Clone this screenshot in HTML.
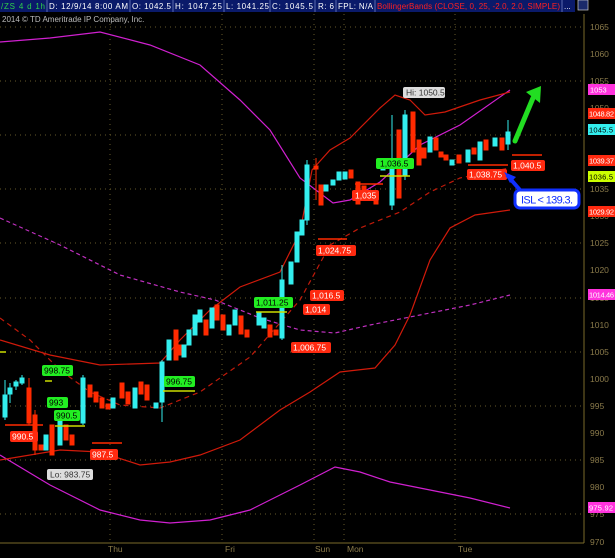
<!DOCTYPE html><html><head><style>
body{margin:0;background:#000;width:615px;height:553px;overflow:hidden;font-family:"Liberation Sans",sans-serif}
</style></head><body>
<svg width="615" height="553" xmlns="http://www.w3.org/2000/svg" font-family="Liberation Sans, sans-serif">
<rect width="615" height="553" fill="#000"/>
<!-- header -->
<rect x="0" y="0" width="575" height="12" fill="#0a1a6a"/>
<g stroke="#5a6ab0" stroke-width="1"><line x1="47" y1="0" x2="47" y2="12"/><line x1="130" y1="0" x2="130" y2="12"/><line x1="173" y1="0" x2="173" y2="12"/><line x1="224" y1="0" x2="224" y2="12"/><line x1="270" y1="0" x2="270" y2="12"/><line x1="315" y1="0" x2="315" y2="12"/><line x1="336" y1="0" x2="336" y2="12"/><line x1="375" y1="0" x2="375" y2="12"/><line x1="562" y1="0" x2="562" y2="12"/></g>
<g font-size="8" fill="#fff">
<text x="1" y="9" fill="#2ed04a" textLength="44">/ZS 4 d 1h</text>
<text x="49" y="9" textLength="79">D: 12/9/14 8:00 AM</text>
<text x="132" y="9" textLength="39">O: 1042.5</text>
<text x="175" y="9" textLength="47">H: 1047.25</text>
<text x="226" y="9" textLength="43">L: 1041.25</text>
<text x="272" y="9" textLength="41">C: 1045.5</text>
<text x="318" y="9" textLength="16">R: 6</text>
<text x="338" y="9" textLength="35">FPL: N/A</text>
<text x="377" y="9" fill="#ff2020" textLength="183">BollingerBands (CLOSE, 0, 25, -2.0, 2.0, SIMPLE)</text>
<text x="564" y="9">...</text>
</g>
<rect x="578" y="0" width="10" height="10" fill="#1a2a6a" stroke="#ccc" stroke-width="0.7"/>
<text x="2" y="22" font-size="8" fill="#bbb">2014 © TD Ameritrade IP Company, Inc.</text>
<!-- grid -->
<g stroke="#665a2a" stroke-width="1" stroke-dasharray="1,4">
<line x1="0" y1="27" x2="583" y2="27"/><line x1="0" y1="81" x2="583" y2="81"/><line x1="0" y1="135" x2="583" y2="135"/><line x1="0" y1="189" x2="583" y2="189"/><line x1="0" y1="243" x2="583" y2="243"/><line x1="0" y1="298" x2="583" y2="298"/><line x1="0" y1="352" x2="583" y2="352"/><line x1="0" y1="406" x2="583" y2="406"/><line x1="0" y1="460" x2="583" y2="460"/><line x1="0" y1="514" x2="583" y2="514"/>
<line x1="110" y1="14" x2="110" y2="542"/><line x1="222" y1="14" x2="222" y2="542"/><line x1="314" y1="14" x2="314" y2="542"/><line x1="344" y1="14" x2="344" y2="542"/><line x1="455" y1="14" x2="455" y2="542"/>
</g>
<!-- right axis -->
<line x1="584" y1="14" x2="584" y2="543" stroke="#7a6a2a"/>
<line x1="0" y1="543" x2="584" y2="543" stroke="#7a6a2a"/>
<g font-size="8.5" fill="#8a7a4a">
<text x="590" y="30">1065</text><text x="590" y="57">1060</text><text x="590" y="84">1055</text><text x="590" y="111">1050</text><text x="590" y="165">1040</text><text x="590" y="192">1035</text><text x="590" y="219">1030</text><text x="590" y="246">1025</text><text x="590" y="273">1020</text><text x="590" y="301">1015</text><text x="590" y="328">1010</text><text x="590" y="355">1005</text><text x="590" y="382">1000</text><text x="590" y="409">995</text><text x="590" y="436">990</text><text x="590" y="463">985</text><text x="590" y="490">980</text><text x="590" y="517">975</text><text x="590" y="545">970</text>
<text x="108" y="552">Thu</text><text x="225" y="552">Fri</text><text x="315" y="552">Sun</text><text x="347" y="552">Mon</text><text x="458" y="552">Tue</text>
</g>
<g font-size="7.5">
<rect x="588" y="84" width="27" height="11" fill="#ff33dd"/><text x="590" y="92.5" fill="#fff">1053</text>
<rect x="588" y="108" width="27" height="11" fill="#ff2a10"/><text x="589" y="116.5" fill="#fff" textLength="25">1048.82</text>
<rect x="588" y="124" width="27" height="11" fill="#33eeee"/><text x="589" y="132.5" fill="#000" textLength="24">1045.5</text>
<rect x="588" y="155" width="27" height="11" fill="#ff2a10"/><text x="589" y="163.5" fill="#fff" textLength="25">1039.37</text>
<rect x="588" y="171" width="27" height="11" fill="#ccff00"/><text x="589" y="179.5" fill="#000" textLength="24">1036.5</text>
<rect x="588" y="206" width="27" height="11" fill="#ff2a10"/><text x="589" y="214.5" fill="#fff" textLength="25">1029.92</text>
<rect x="588" y="289" width="27" height="11" fill="#ff33dd"/><text x="589" y="297.5" fill="#fff" textLength="25">1014.46</text>
<rect x="588" y="502" width="27" height="11" fill="#ff33dd"/><text x="589" y="510.5" fill="#fff" textLength="24">975.92</text>
</g>
<!-- bands -->
<g fill="none" stroke-width="1.2">
<polyline stroke="#d020d0" points="0,42 50,38 100,32 150,45 200,65 240,100 270,130 300,178 333,203 350,200 380,182 420,145 460,125 510,90"/>
<polyline stroke="#d020d0" points="0,455 50,485 100,510 140,520 170,523 210,520 250,510 300,485 335,467 360,472 390,482 430,490 470,498 510,508"/>
<polyline stroke="#c030c0" stroke-dasharray="4,3" points="0,218 60,245 120,275 180,292 215,300 260,318 300,330 335,333 370,325 420,315 470,305 510,295"/>
<polyline stroke="#d01a0a" points="0,340 50,355 100,365 160,363 180,340 210,310 240,287 280,272 300,232 312,170 330,150 350,138 380,108 395,95 410,100 425,115 445,112 480,100 510,92"/>
<polyline stroke="#d01a0a" points="0,460 60,450 100,452 140,465 170,462 200,455 240,440 280,410 310,392 340,372 375,368 395,345 410,315 430,260 450,228 475,215 510,210"/>
<polyline stroke="#c01a0a" stroke-dasharray="5,4" points="0,318 30,340 60,370 90,392 120,405 160,408 200,392 250,357 300,300 330,245 360,228 400,212 430,192 460,178 490,172 510,168"/>
</g>
<!-- candles -->
<g stroke-width="1">
<g stroke="#33eeee" fill="#33eeee">
<line x1="5" y1="380" x2="5" y2="420"/><rect x="3" y="395" width="4" height="22"/>
<line x1="10" y1="383" x2="10" y2="403"/><rect x="8" y="388" width="4" height="6"/>
<line x1="16" y1="380" x2="16" y2="390"/><rect x="14" y="382" width="4" height="4"/>
<line x1="22" y1="375" x2="22" y2="385"/><rect x="20" y="378" width="4" height="5"/>
<rect x="44" y="435" width="4" height="15"/><rect x="58" y="415" width="4" height="30"/>
<line x1="83" y1="375" x2="83" y2="425"/><rect x="81" y="378" width="4" height="45"/>
<rect x="111" y="398" width="4" height="10"/><rect x="133" y="388" width="4" height="20"/>
<rect x="154" y="403" width="4" height="5"/><line x1="162" y1="360" x2="162" y2="422"/><rect x="160" y="362" width="4" height="40"/>
<rect x="167" y="340" width="4" height="20"/><rect x="182" y="345" width="4" height="12"/><rect x="187" y="330" width="4" height="15"/>
<rect x="193" y="315" width="4" height="20"/><rect x="198" y="310" width="4" height="12"/><rect x="210" y="308" width="4" height="20"/>
<rect x="227" y="325" width="4" height="10"/><rect x="233" y="310" width="4" height="15"/><rect x="257" y="312" width="4" height="13"/>
<rect x="262" y="318" width="4" height="10"/><line x1="282" y1="265" x2="282" y2="340"/><rect x="280" y="280" width="4" height="58"/>
<rect x="289" y="262" width="4" height="22"/><rect x="295" y="232" width="4" height="30"/><rect x="300" y="220" width="4" height="15"/>
<line x1="307" y1="160" x2="307" y2="225"/><rect x="305" y="165" width="4" height="55"/>
<rect x="324" y="185" width="4" height="6"/><rect x="331" y="180" width="4" height="5"/><rect x="337" y="172" width="4" height="8"/><rect x="343" y="172" width="4" height="7"/>
<rect x="381" y="160" width="4" height="10"/><line x1="392" y1="115" x2="392" y2="210"/><rect x="390" y="165" width="4" height="40"/>
<line x1="405" y1="110" x2="405" y2="180"/><rect x="403" y="115" width="4" height="60"/><rect x="428" y="137" width="4" height="15"/>
<rect x="450" y="160" width="4" height="5"/><rect x="466" y="150" width="4" height="12"/><rect x="478" y="142" width="4" height="18"/>
<rect x="493" y="138" width="4" height="8"/><rect x="506" y="132" width="4" height="12"/><line x1="508" y1="120" x2="508" y2="150"/>
</g>
<g stroke="#ff2a00" fill="#ff2a00">
<rect x="27" y="388" width="4" height="35"/><line x1="29" y1="378" x2="29" y2="425"/>
<rect x="33" y="415" width="4" height="35"/><line x1="35" y1="410" x2="35" y2="455"/>
<rect x="39" y="445" width="4" height="5"/><rect x="50" y="425" width="4" height="30"/><rect x="64" y="425" width="4" height="15"/><rect x="70" y="435" width="4" height="10"/>
<rect x="88" y="385" width="4" height="12"/><rect x="94" y="392" width="4" height="10"/><rect x="100" y="398" width="4" height="10"/><rect x="106" y="404" width="4" height="5"/>
<rect x="120" y="383" width="4" height="15"/><rect x="126" y="392" width="4" height="12"/><rect x="139" y="382" width="4" height="12"/><rect x="145" y="385" width="4" height="15"/>
<rect x="174" y="330" width="4" height="30"/><rect x="177" y="345" width="4" height="10"/><rect x="204" y="320" width="4" height="15"/>
<rect x="215" y="305" width="4" height="15"/><rect x="221" y="315" width="4" height="15"/><rect x="239" y="316" width="4" height="18"/>
<rect x="245" y="330" width="4" height="7"/><rect x="268" y="325" width="4" height="12"/><rect x="274" y="330" width="4" height="5"/>
<rect x="314" y="166" width="4" height="3"/><line x1="316" y1="158" x2="316" y2="200"/><rect x="319" y="185" width="4" height="20"/>
<rect x="349" y="170" width="4" height="8"/><rect x="356" y="182" width="4" height="22"/><rect x="362" y="186" width="4" height="10"/>
<rect x="368" y="195" width="4" height="5"/><rect x="374" y="198" width="4" height="6"/><rect x="397" y="130" width="4" height="68"/>
<rect x="411" y="112" width="4" height="40"/><rect x="417" y="140" width="4" height="25"/><rect x="422" y="148" width="4" height="10"/>
<rect x="434" y="138" width="4" height="12"/><rect x="439" y="152" width="4" height="5"/><rect x="444" y="155" width="4" height="5"/>
<rect x="457" y="155" width="4" height="8"/><rect x="472" y="148" width="4" height="6"/><rect x="484" y="140" width="4" height="10"/>
<rect x="500" y="138" width="4" height="12"/>
</g>
</g>
<!-- marker lines -->
<g stroke-width="1.5">
<line x1="5" y1="425" x2="43" y2="425" stroke="#ff2a00"/><line x1="92" y1="443" x2="122" y2="443" stroke="#ff2a00"/>
<line x1="55" y1="426" x2="85" y2="426" stroke="#ccdd00"/><line x1="163" y1="391" x2="195" y2="391" stroke="#ccdd00"/>
<line x1="256" y1="312" x2="287" y2="312" stroke="#ccdd00"/><line x1="380" y1="176" x2="410" y2="176" stroke="#ccdd00"/>
<line x1="318" y1="239" x2="347" y2="239" stroke="#ff2a00"/><line x1="355" y1="184" x2="383" y2="184" stroke="#ff2a00"/>
<line x1="468" y1="165" x2="508" y2="165" stroke="#ff2a00"/><line x1="512" y1="155" x2="542" y2="155" stroke="#ff2a00"/>
<line x1="45" y1="381" x2="52" y2="381" stroke="#ccdd00"/>
</g>
<!-- labels -->
<g font-size="8.5">
<rect x="403" y="87" width="42" height="11" rx="2" fill="#ddd"/><text x="406" y="95.5" fill="#333">Hi: 1050.5</text>
<rect x="47" y="469" width="46" height="11" rx="2" fill="#ddd"/><text x="50" y="477.5" fill="#333">Lo: 983.75</text>
<rect x="10" y="431" width="28" height="11" rx="2" fill="#ff2a10"/><text x="12" y="439.5" fill="#fff">990.5</text>
<rect x="90" y="449" width="28" height="11" rx="2" fill="#ff2a10"/><text x="92" y="457.5" fill="#fff">987.5</text>
<rect x="42" y="365" width="31" height="11" rx="2" fill="#22ee22"/><text x="44" y="373.5" fill="#000">998.75</text>
<rect x="47" y="397" width="21" height="11" rx="2" fill="#22ee22"/><text x="49" y="405.5" fill="#000">993</text>
<rect x="54" y="410" width="26" height="11" rx="2" fill="#22ee22"/><text x="56" y="418.5" fill="#000">990.5</text>
<rect x="164" y="376" width="31" height="11" rx="2" fill="#22ee22"/><text x="166" y="384.5" fill="#000">996.75</text>
<rect x="254" y="297" width="39" height="11" rx="2" fill="#22ee22"/><text x="256" y="305.5" fill="#000">1,011.25</text>
<rect x="291" y="342" width="40" height="11" rx="2" fill="#ff2a10"/><text x="293" y="350.5" fill="#fff">1,006.75</text>
<rect x="303" y="304" width="27" height="11" rx="2" fill="#ff2a10"/><text x="305" y="312.5" fill="#fff">1,014</text>
<rect x="310" y="290" width="34" height="11" rx="2" fill="#ff2a10"/><text x="312" y="298.5" fill="#fff">1,016.5</text>
<rect x="316" y="245" width="40" height="11" rx="2" fill="#ff2a10"/><text x="318" y="253.5" fill="#fff">1,024.75</text>
<rect x="352" y="190" width="27" height="11" rx="2" fill="#ff2a10"/><text x="355" y="198.5" fill="#fff">1,035</text>
<rect x="376" y="158" width="38" height="11" rx="2" fill="#22ee22"/><text x="380" y="166.5" fill="#000">1,036.5</text>
<rect x="467" y="169" width="40" height="11" rx="2" fill="#ff2a10"/><text x="469" y="177.5" fill="#fff">1,038.75</text>
<rect x="511" y="160" width="34" height="11" rx="2" fill="#ff2a10"/><text x="513" y="168.5" fill="#fff">1,040.5</text>
</g>
<!-- ISL callout -->
<path d="M507,175 L520,190" stroke="#1030ff" stroke-width="4"/>
<path d="M504,172 L516,177 L510,183 Z" fill="#1030ff"/>
<rect x="515" y="190" width="64" height="18" rx="5" fill="#fff" stroke="#1030ff" stroke-width="3"/>
<text x="521" y="203.5" font-size="11" fill="#1030ff" textLength="52">ISL &lt; 139.3.</text>
<!-- green arrow -->
<path d="M515,141 L533,98" stroke="#22dd22" stroke-width="5" stroke-linecap="round"/>
<path d="M526,92 L541,86 L540,103 Z" fill="#22dd22"/>
<line x1="0" y1="352" x2="6" y2="352" stroke="#ccdd00" stroke-width="1.5"/>
</svg>
</body></html>
